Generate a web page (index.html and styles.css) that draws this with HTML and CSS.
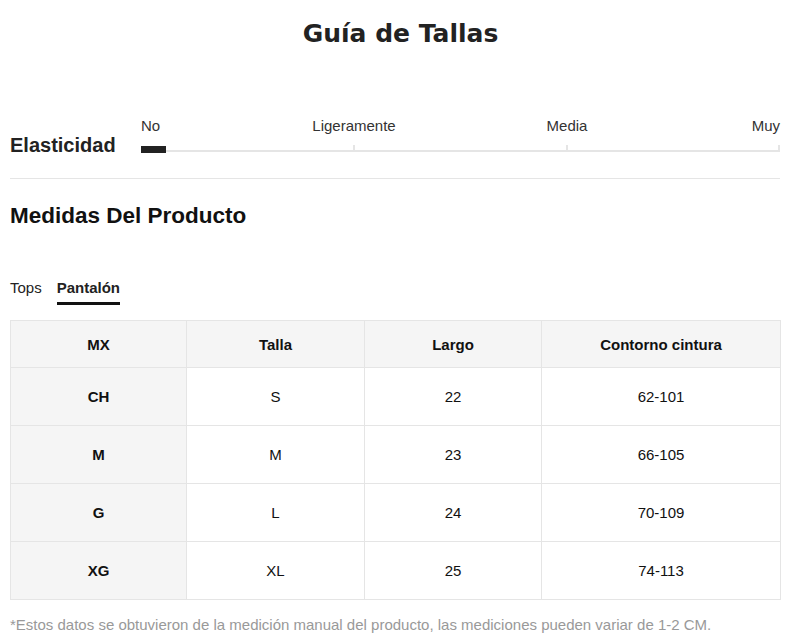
FILE: index.html
```html
<!DOCTYPE html>
<html lang="es">
<head>
<meta charset="utf-8">
<title>Guía de Tallas</title>
<link rel="stylesheet" href="styles.css">
</head>
<body>
<div class="page">
  <h1 class="title">Guía de Tallas</h1>

  <section class="elastic">
    <div class="elastic-label">Elasticidad</div>
    <div class="scale">
      <div class="scale-labels">
        <span class="sl sl-first">No</span>
        <span class="sl sl-mid">Ligeramente</span>
        <span class="sl sl-mid">Media</span>
        <span class="sl sl-last">Muy</span>
      </div>
      <div class="track">
        <span class="tick t1"></span>
        <span class="tick t2"></span>
        <span class="tick t3"></span>
        <span class="indicator"></span>
      </div>
    </div>
  </section>

  <h2 class="section-title">Medidas Del Producto</h2>

  <div class="tabs">
    <span class="tab">Tops</span>
    <span class="tab active">Pantalón</span>
  </div>

  <table class="size-table">
    <colgroup>
      <col class="c1"><col class="c2"><col class="c3"><col class="c4">
    </colgroup>
    <thead>
      <tr><th>MX</th><th>Talla</th><th>Largo</th><th>Contorno cintura</th></tr>
    </thead>
    <tbody>
      <tr><th>CH</th><td>S</td><td>22</td><td>62-101</td></tr>
      <tr><th>M</th><td>M</td><td>23</td><td>66-105</td></tr>
      <tr><th>G</th><td>L</td><td>24</td><td>70-109</td></tr>
      <tr><th>XG</th><td>XL</td><td>25</td><td>74-113</td></tr>
    </tbody>
  </table>

  <p class="note">*Estos datos se obtuvieron de la medición manual del producto, las mediciones pueden variar de 1-2 CM.</p>
</div>
</body>
</html>
```

FILE: styles.css
```css
html, body {
  margin: 0;
  padding: 0;
  background: #fff;
}
body {
  font-family: "Liberation Sans", Arial, sans-serif;
  color: #222;
}
.page {
  width: 770px;
  margin-left: 10px;
}
.title {
  margin: 0;
  padding: 19px 0 0 11px;
  font-family: "DejaVu Sans", "Liberation Sans", sans-serif;
  font-size: 25px;
  line-height: 30px;
  font-weight: 700;
  text-align: center;
  color: #222;
}
.elastic {
  display: flex;
  align-items: flex-end;
  margin-top: 68px;
  padding-bottom: 26px;
  border-bottom: 1px solid #e5e5e5;
}
.elastic-label {
  width: 131px;
  font-size: 20px;
  line-height: 24px;
  font-weight: 700;
  color: #222;
  margin-bottom: -5px;
}
.scale {
  flex: 1;
}
.scale-labels {
  display: grid;
  grid-template-columns: repeat(6, 1fr);
  font-size: 15px;
  line-height: 17px;
  color: #333;
  white-space: nowrap;
}
.sl-first { grid-column: 1; text-align: left; }
.sl-mid { grid-column: span 2; text-align: center; }
.sl-last { grid-column: 6; text-align: right; }
.track {
  position: relative;
  height: 2px;
  margin-top: 16px;
  background: #e5e5e5;
}
.tick {
  position: absolute;
  bottom: 0;
  width: 2px;
  height: 7px;
  background: #e5e5e5;
}
.t1 { left: 212px; }
.t2 { left: 425px; }
.t3 { right: 0; }
.indicator {
  position: absolute;
  left: 0;
  bottom: -1px;
  width: 25px;
  height: 7px;
  background: #222;
}
.section-title {
  margin: 24px 0 0;
  font-size: 22.5px;
  line-height: 26px;
  font-weight: 700;
  color: #111;
}
.tabs {
  display: flex;
  gap: 15px;
  margin-top: 50px;
  font-size: 15px;
  line-height: 17px;
  color: #222;
}
.tab {
  padding-bottom: 6px;
  border-bottom: 3px solid transparent;
}
.tab.active {
  font-weight: 700;
  border-bottom-color: #111;
}
.size-table {
  margin-top: 15px;
  width: 770px;
  border-collapse: collapse;
  table-layout: fixed;
  font-size: 15px;
  color: #111;
}
.c1 { width: 176px; }
.c2 { width: 178px; }
.c3 { width: 177px; }
.c4 { width: 239px; }
.size-table th,
.size-table td {
  border: 1px solid #e5e5e5;
  text-align: center;
  padding: 0;
}
.size-table thead th {
  height: 46px;
  background: #f5f5f5;
  font-weight: 700;
}
.size-table tbody th {
  background: #f5f5f5;
  font-weight: 700;
}
.size-table tbody td,
.size-table tbody th {
  height: 57px;
}
.note {
  margin: 16px 0 0;
  font-size: 15px;
  line-height: 18px;
  color: #999;
}
```
